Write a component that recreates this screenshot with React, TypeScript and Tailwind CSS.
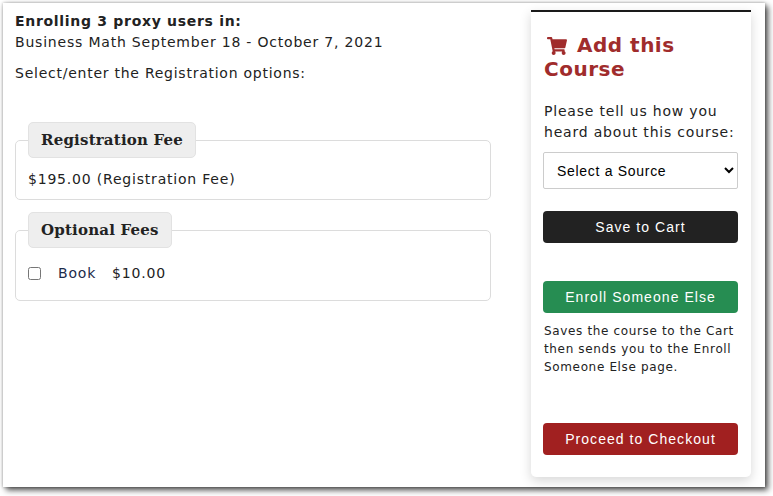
import { FaShoppingCart } from "react-icons/fa";

const bodyFont = "font-['DejaVu_Sans',sans-serif] tracking-[0.8px] text-[14px] text-[#222]";
const buttonFont = "font-['Liberation_Sans',sans-serif] tracking-[1.05px] text-[14px] text-white";

function FeeBox({ title, className, children }: { title: string; className: string; children: React.ReactNode }) {
  return (
    <fieldset className={`rounded-[5px] border border-[#dcdcdc] px-3 ${className}`}>
      <legend className="h-[36px] rounded-[5px] border border-[#e2e2e2] bg-[#eeeeee] px-3 font-['DejaVu_Serif',serif] text-[15px] font-bold leading-[34px] tracking-[0.2px] text-[#222]">
        {title}
      </legend>
      {children}
    </fieldset>
  );
}

export default function App() {
  return (
    <div className="h-[496px] w-[773px] overflow-hidden bg-white pl-[3px] pt-[3px]">
      <div className={`flex h-[484px] w-[762px] bg-white pl-3 shadow-[3px_3px_6px_rgba(0,0,0,0.7),0_0_3px_rgba(0,0,0,0.3)] ${bodyFont}`}>
        <div className="w-[476px] shrink-0">
          <h1 className="mt-[9px] text-[14px] font-bold leading-[18px] tracking-[0.7px]">Enrolling 3 proxy users in:</h1>
          <p className="mt-[2px] leading-[20px]">Business Math September 18 - October 7, 2021</p>
          <p className="mt-[11px] leading-[20px] tracking-[0.75px]">Select/enter the Registration options:</p>
          <FeeBox title="Registration Fee" className="mt-[39px] h-[78px]">
            <p className="mt-[11px] leading-[20px]">$195.00 (Registration Fee)</p>
          </FeeBox>
          <FeeBox title="Optional Fees" className="mt-[12px] h-[89px]">
            <div className="mt-[15px] flex items-center leading-[20px]">
              <input type="checkbox" className="h-[13px] w-[13px]" />
              <span className="ml-[17px] text-[#1c2b4a]">Book</span>
              <span className="ml-[16px]">$10.00</span>
            </div>
          </FeeBox>
        </div>
        <aside className="ml-[40px] mt-[7px] flex h-[467px] w-[220px] shrink-0 flex-col rounded-b-[5px] border-t-[2px] border-[#1a1a1a] bg-white px-[12px] shadow-[0_4px_12px_rgba(0,0,0,0.16)]">
          <h2 className="mt-[21px] pl-[1px] font-['DejaVu_Sans',sans-serif] text-[20px] font-bold leading-[24px] tracking-[0.5px] text-[#a02c2c]">
            <FaShoppingCart className="ml-[3px] mr-[10px] inline h-[18px] w-[20px] align-[-3px]" />
            Add this Course
          </h2>
          <p className="mt-[20px] pl-[1px] leading-[21px]">Please tell us how you heard about this course:</p>
          <select className="mt-[9px] h-[37px] w-[195px] rounded-[2px] border border-[#cccccc] bg-white pl-[9px] font-['Liberation_Sans',sans-serif] text-[14px] tracking-[0.7px] text-black">
            <option>Select a Source</option>
          </select>
          <button className={`mt-[22px] h-[32px] w-[195px] rounded-[4px] bg-[#222222] ${buttonFont}`}>Save to Cart</button>
          <button className={`mt-[38px] h-[32px] w-[195px] rounded-[4px] bg-[#268d52] ${buttonFont}`}>Enroll Someone Else</button>
          <p className="mt-[9px] pl-[1px] text-[12px] leading-[18px] tracking-[0.65px]">
            Saves the course to the Cart then sends you to the Enroll Someone Else page.
          </p>
          <button className={`mt-[47px] h-[32px] w-[195px] rounded-[4px] bg-[#a12020] ${buttonFont}`}>Proceed to Checkout</button>
        </aside>
      </div>
    </div>
  );
}
